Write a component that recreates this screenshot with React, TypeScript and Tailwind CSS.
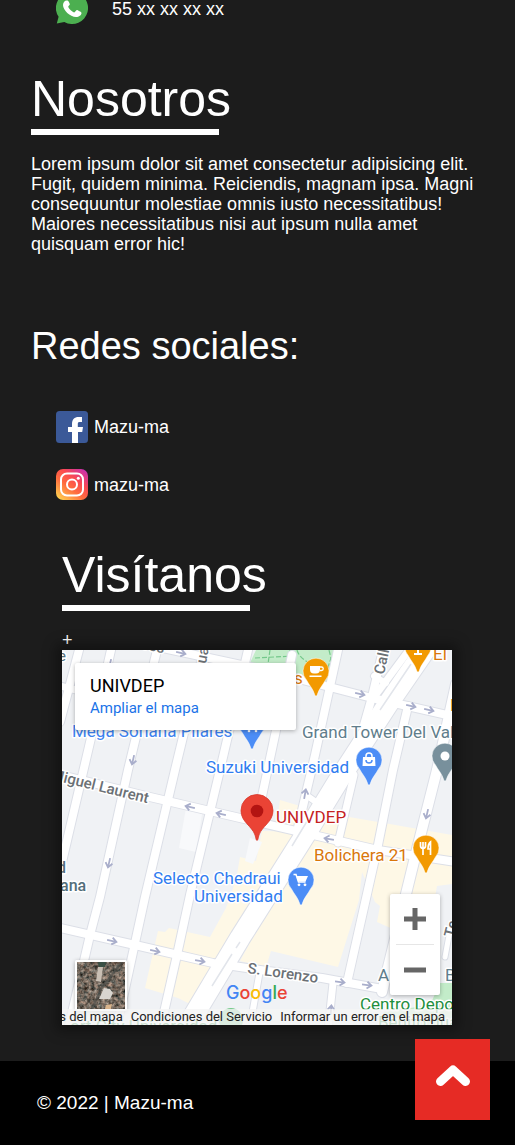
import React from "react";

const ROADS: { d: string; w: number }[] = [
  { d: "M79 650L60 722", w: 8 },
  { d: "M111 650L91 738L62 862", w: 8 },
  { d: "M157 650L128 770L100 897L90 935L68 1030", w: 8 },
  { d: "M204 650L175 770L145 897L135 943L116 1030", w: 8 },
  { d: "M248 650L220 770L190 895L177 955L160 1030", w: 8 },
  { d: "M292 655L268 768L258 815", w: 8 },
  { d: "M338 650L315 755L297 832", w: 8 },
  { d: "M383 650L372 697L364 725", w: 8 },
  { d: "M408 706L393 770L378 845L347 983", w: 8 },
  { d: "M354 775L338 843", w: 7 },
  { d: "M456 684L437 770L418 845L382 992", w: 10 },
  { d: "M451 925L445 957", w: 5 },
  { d: "M333 983L328 1030", w: 7 },
  { d: "M260 970L252 1015", w: 6 },
  { d: "M60 686L80 691L150 706L230 722", w: 7 },
  { d: "M163 648L260 669L372 698L456 717", w: 8 },
  { d: "M60 775L150 797L240 818L322 837L378 850L456 862", w: 8 },
  { d: "M60 928L135 945L213 963L260 970L322 978L382 989", w: 8 },
  { d: "M306 795L316 802", w: 6 },
  { d: "M374 676L386 683", w: 6 },
  { d: "M432 640L388 704L340 778L307 832L240 938L182 1035", w: 20 },
  { d: "M412 646L372 700", w: 7 },
];

const ARROWS: [number, number, number][] = [
  [181, 653, 13],
  [110, 664, 103],
  [133, 760, 103],
  [360, 694, 13],
  [411, 706, 13],
  [429, 710, 13],
  [190, 807, 193],
  [221, 814, 193],
  [109, 863, 103],
  [329, 839, 190],
  [305, 794, -80],
  [427, 814, 103],
  [112, 941, 12],
  [155, 951, 12],
  [200, 961, 10],
  [340, 982, 8],
  [367, 985, 8],
  [331, 1010, -85],
];

function Pin({ x, y, color, children }: { x: number; y: number; color: string; children?: React.ReactNode }) {
  return (
    <g transform={`translate(${x} ${y})`}>
      <path
        d="M-1 24.500C-3 17.500-7 14-9.500 9A13 13 0 1 1 9.500 9C7 14 3 17.500 1 24.500Q0 25.500-1 24.500Z"
        fill={color}
        stroke="#fff"
        strokeOpacity=".5"
        strokeWidth="1"
      />
      {children}
    </g>
  );
}

function Label({
  x,
  y,
  fill,
  size = 17,
  rotate = 0,
  weight = 400,
  children,
}: {
  x: number;
  y: number;
  fill: string;
  size?: number;
  rotate?: number;
  weight?: number;
  children: string;
}) {
  return (
    <text
      transform={`translate(${x} ${y}) rotate(${rotate})`}
      fill={fill}
      fontSize={size}
      fontWeight={weight}
      stroke="#fff"
      strokeWidth="3"
      strokeLinejoin="round"
      paintOrder="stroke"
    >
      {children}
    </text>
  );
}

function StreetMap() {
  return (
    <svg
      className="block h-full w-full font-[Roboto,sans-serif]"
      viewBox="62 650 390 375"
      preserveAspectRatio="xMidYMid slice"
      role="img"
      aria-label="Mapa"
    >
      <rect x="50" y="640" width="420" height="400" fill="#f0f2f5" />
      <g fill="#fef8e6">
        <path d="M280 800L300 806L330 815L349 817L384 823L452 835V884L437 886L435 897L395 930L377 922L380 906L375 902L362 872L359 900L338 967L271 951L266 967L240 961L300 850L297 832L277 822Z" />
        <path d="M262 831L310 832L240 940L193 1000L190 1004L178 998L145 988L158 931L165 932L169 928L210 937L226 908L236 880L240 857L256 861Z" />
      </g>
      <g fill="#f8f9fb">
        <path d="M186 808L202 814L196 852L179 848Z" />
        <path d="M250 838L262 842L253 864L245 861Z" />
      </g>
      <path d="M256 650H337L328 683L297 676L250 663ZM440 983H452V1025H380L384 1012L430 1005Z" fill="#c3ecc9" />
      <path
        d="M255 658L293 656L292 650M270 650L268 664M297 650Q300 660 313 664M329 650L331 658L326 674M290 650L287 664"
        fill="none"
        stroke="#74c88a"
        strokeWidth="1.200"
        strokeDasharray="5 2"
      />
      <g fill="none" stroke="#dcdfe7" strokeLinejoin="round" strokeLinecap="round">
        {ROADS.map((r, i) => (
          <path key={i} d={r.d} strokeWidth={r.w + 2} />
        ))}
      </g>
      <g fill="none" stroke="#fff" strokeLinejoin="round" strokeLinecap="round">
        {ROADS.map((r, i) => (
          <path key={i} d={r.d} strokeWidth={r.w} />
        ))}
      </g>
      <path d="M411 664L380 710M240 942L236 948M232 954L212 986M309 818L292 846" stroke="#e2e5eb" strokeWidth="1.500" fill="none" />
      {ARROWS.map(([x, y, a], i) => (
        <path
          key={i}
          transform={`translate(${x} ${y}) rotate(${a})`}
          d="M-5 0H4M0-3.500L4.500 0L0 3.500"
          fill="none"
          stroke="#a9aecb"
          strokeWidth="1.800"
        />
      ))}

      <Pin x={252} y={724} color="#4c8df6">
        <circle cx="-3" cy="7" r="1.300" fill="#fff" />
        <circle cx="4" cy="7" r="1.300" fill="#fff" />
      </Pin>
      <Pin x={316} y={671} color="#f29900">
        <path d="M-6-5H4V-1.500A4 4 0 0 1 0 2.500H-2A4 4 0 0 1-6-1.500ZM-6.500 4.500H5.500V6H-6.500Z" fill="#fff" />
        <path d="M4-4H5.500A1.500 1.500 0 0 1 5.500-.5H4" fill="none" stroke="#fff" strokeWidth="1.300" />
      </Pin>
      <Pin x={418} y={647} color="#f29900">
        <path d="M-1 0H1V6H4V8H-4V6H-1Z" fill="#fff" />
      </Pin>
      <Pin x={369} y={760} color="#4c8df6">
        <path d="M-6-3H6L6.500 6H-6.500Z" fill="#fff" />
        <path d="M-3-3V-4A3 3 0 0 1 3-4V-3" fill="none" stroke="#fff" strokeWidth="1.500" />
        <path d="M-3 0A3 3 0 0 0 3 0" fill="none" stroke="#4c8df6" strokeWidth="1.500" />
      </Pin>
      <Pin x={445} y={756} color="#78909c">
        <circle r="4.500" fill="#fff" />
      </Pin>
      <Pin x={426} y={848} color="#f29900">
        <path
          d="M-5.500-6V-2Q-5.500 0-3 .5V7M-3-6V0M-.5-6V-2Q-.5 0-3 .5M4.500 7V-6Q2-4 2 1H4.500"
          fill="none"
          stroke="#fff"
          strokeWidth="1.700"
        />
      </Pin>
      <Pin x={301} y={880} color="#4c8df6">
        <path d="M-7.500-5.500H-5L-2.500 2H4.500" fill="none" stroke="#fff" strokeWidth="1.500" />
        <path d="M-4.500-4H7L4.500 1.500H-3Z" fill="#fff" />
        <circle cx="-2" cy="4.800" r="1.400" fill="#fff" />
        <circle cx="4" cy="4.800" r="1.400" fill="#fff" />
      </Pin>
      <circle cx="231" cy="1020" r="12" fill="#74c88a" />

      <Label x={58} y={661} fill="#546e7a" size={15}>e</Label>
      <Label x={143} y={649} fill="#6b7075" size={15} rotate={12} weight={500}>res</Label>
      <Label x={206} y={664} fill="#6b7075" size={15} rotate={-80} weight={500}>uan</Label>
      <Label x={294} y={684} fill="#d9770b">s</Label>
      <Label x={433} y={660} fill="#d9770b">El</Label>
      <Label x={450} y={711} fill="#d9770b">L</Label>
      <Label x={384} y={675} fill="#6b7075" size={15} rotate={-78} weight={500}>Calle</Label>
      <Label x={72} y={737} fill="#3c82f0">Mega Soriana Pilares</Label>
      <Label x={206} y={773} fill="#2f7cf0">Suzuki Universidad</Label>
      <Label x={302} y={738} fill="#607d8b">Grand Tower Del Valle</Label>
      <Label x={50} y={779} fill="#6b7075" size={15} rotate={14} weight={500}>Miguel Laurent</Label>
      <Label x={276} y={823} fill="#c5221f">UNIVDEP</Label>
      <Label x={314} y={861} fill="#d9770b">Bolichera 21</Label>
      <Label x={153} y={884} fill="#2f7cf0">Selecto Chedraui</Label>
      <Label x={194} y={902} fill="#2f7cf0">Universidad</Label>
      <Label x={57} y={873} fill="#546e7a" size={16} weight={500}>d</Label>
      <Label x={60} y={891} fill="#546e7a" size={16} weight={500}>ana</Label>
      <Label x={247} y={973} fill="#6b7075" size={15} rotate={8} weight={500}>S. Lorenzo</Label>
      <Label x={454} y={938} fill="#6b7075" size={15} rotate={-76} weight={500}>Te</Label>
      <Label x={378} y={981} fill="#607d8b">A</Label>
      <Label x={445} y={981} fill="#607d8b">B</Label>
      <Label x={360} y={1010} fill="#1e8e3e">Centro Deportivo</Label>
      <Label x={378} y={1028} fill="#1e8e3e">Benito Juárez</Label>
      <Label x={70} y={1032} fill="#1e8e3e">ort City Universidad</Label>

      <path
        d="M257 840.500C256 840.500 256 838 255 835C252 826 241 822 241 810.500A16 16 0 0 1 273 810.500C273 822 262 826 259 835C258 838 258 840.500 257 840.500Z"
        fill="#ea4335"
        stroke="#d8382c"
        strokeWidth=".8"
      />
      <circle cx="257" cy="811" r="6.300" fill="#b31412" />
    </svg>
  );
}

function SatelliteThumb() {
  return (
    <svg viewBox="0 0 48 47" className="block h-full w-full" preserveAspectRatio="xMidYMid slice" aria-hidden="true">
      <defs>
        <filter id="roofs" x="0" y="0" width="100%" height="100%" colorInterpolationFilters="sRGB">
          <feTurbulence type="fractalNoise" baseFrequency="0.28" numOctaves="3" seed="8" />
          <feColorMatrix values="0.900 0 0 0 -0.010  0.750 0.150 0 0 -0.050  0.680 0.200 0 0 -0.080  0 0 0 0 1" />
        </filter>
      </defs>
      <rect width="48" height="47" fill="#6f6058" />
      <rect width="48" height="47" filter="url(#roofs)" />
      <path d="M45 0L24 27L15 47" fill="none" stroke="#4b4d49" strokeOpacity=".7" strokeWidth="2.500" />
      <path d="M21 0H29L28 5L22 6Z" fill="#3a5045" />
      <path d="M21 5L26 5L24 20L19 19Z" fill="#c9bfb4" />
      <path d="M27 26L33 27L36 31L33 37L22 37Z" fill="#d8d5d0" />
      <path d="M29 43L35 42L34 47H28Z" fill="#d9b48c" />
    </svg>
  );
}

function WhatsAppIcon() {
  return (
    <svg viewBox="0 0 32 32" className="h-8 w-8 shrink-0" aria-hidden="true">
      <path d="M16 0A16 16 0 1 1 8.300 30L.8 31.600L2.600 24.700A16 16 0 0 1 16 0Z" fill="#4caf50" />
      <path
        d="M10.500 8.500C9 8.500 7 10.500 7 13C7 18 14 25 20 25C23 25 25.500 23 25.500 21C25.500 20 21.500 18 20.800 18C20 18 19 20.500 18.200 20.500C17 20.500 12.200 16 12.200 14.700C12.200 14 13.800 13 13.800 12.200C13.800 11.500 12.300 8.500 11.600 8.500Z"
        fill="#fff"
      />
    </svg>
  );
}

function FacebookIcon() {
  return (
    <svg viewBox="0 0 32 32" className="h-8 w-8 shrink-0" aria-hidden="true">
      <rect width="32" height="32" rx="3.500" fill="#3b5998" />
      <path d="M16 32V21H12V16H16V13C16 8.500 18.500 6 22.500 6H26V11H23.500C22 11 21.800 11.800 21.800 13V16H27L26.200 21H22V32Z" fill="#fff" />
    </svg>
  );
}

function InstagramIcon() {
  return (
    <svg viewBox="0 0 32 32" className="h-8 w-8 shrink-0" aria-hidden="true">
      <defs>
        <linearGradient id="ig" x1="0.100" y1="1" x2="0.900" y2="0">
          <stop offset="0" stopColor="#ffd54f" />
          <stop offset=".4" stopColor="#ff6d3f" />
          <stop offset=".65" stopColor="#fb4a50" />
          <stop offset="1" stopColor="#c62fb4" />
        </linearGradient>
      </defs>
      <rect width="32" height="31" rx="7" fill="url(#ig)" />
      <rect x="5" y="4.500" width="22" height="22" rx="6" fill="none" stroke="#fff" strokeWidth="2" />
      <circle cx="16" cy="15.500" r="5" fill="none" stroke="#fff" strokeWidth="2" />
      <circle cx="22.300" cy="9.300" r="1.500" fill="#fff" />
    </svg>
  );
}

function Heading({ children }: { children: string }) {
  return <h2 className="h-16 w-[188px] border-b-6 border-white text-[50px] leading-14 whitespace-nowrap">{children}</h2>;
}

export default function App() {
  return (
    <div className="overflow-hidden bg-[#1c1c1c] font-['Liberation_Sans',Arial,sans-serif] text-[18px] leading-5 text-white">
      <main>
        <section className="px-[31px]">
          <div className="-mt-2 flex items-center gap-6 pl-[25px]">
            <WhatsAppIcon />
            <span className="pt-0.5">55 xx xx xx xx</span>
          </div>
          <div className="mt-[47px]">
            <Heading>Nosotros</Heading>
          </div>
          <p className="mt-[19px]">
            Lorem ipsum dolor sit amet consectetur adipisicing elit. Fugit, quidem minima. Reiciendis, magnam ipsa. Magni
            consequuntur molestiae omnis iusto necessitatibus! Maiores necessitatibus nisi aut ipsum nulla amet quisquam
            error hic!
          </p>
          <h3 className="mt-[70px] text-[38px] leading-11">Redes sociales:</h3>
          <ul className="mt-[43px] flex flex-col gap-[26px] pl-[25px]">
            <li>
              <a href="#facebook" className="flex items-center gap-1.5">
                <FacebookIcon />
                Mazu-ma
              </a>
            </li>
            <li>
              <a href="#instagram" className="flex items-center gap-1.5">
                <InstagramIcon />
                mazu-ma
              </a>
            </li>
          </ul>
        </section>

        <section className="mt-[46px] pr-[63px] pb-9 pl-[62px]">
          <Heading>Visítanos</Heading>
          <p className="mt-5 leading-[19px]">+</p>
          <div className="relative h-[375px] overflow-hidden font-[Roboto,sans-serif] shadow-[0_0_12px_6px_rgba(0,0,0,0.35)]">
            <StreetMap />
            <div className="absolute top-[13px] left-[13px] w-[221px] rounded-xs bg-white px-[15px] pt-3 pb-[11px] shadow-[0_1px_4px_rgba(0,0,0,0.3)]">
              <h4 className="text-[18px] leading-[22px] text-black">UNIVDEP</h4>
              <a href="#mapa" className="block text-[15px] leading-[22px] text-[#1a73e8]">
                Ampliar el mapa
              </a>
            </div>
            <button
              type="button"
              aria-label="Satélite"
              className="absolute bottom-[14px] left-[13px] h-[51px] w-13 overflow-hidden rounded-xs border-2 border-white shadow-[0_1px_4px_rgba(0,0,0,0.3)]"
            >
              <SatelliteThumb />
            </button>
            <div className="absolute right-3 bottom-[30px] w-[50px] rounded-xs bg-white shadow-[0_1px_4px_rgba(0,0,0,0.3)]">
              <button type="button" aria-label="Acercar" className="flex h-[50px] w-full items-center justify-center">
                <svg viewBox="0 0 22 22" className="h-[22px] w-[22px]" aria-hidden="true">
                  <path d="M8.500 0H13.500V8.500H22V13.500H13.500V22H8.500V13.500H0V8.500H8.500Z" fill="#666" />
                </svg>
              </button>
              <div className="mx-1.5 h-px bg-[#e6e6e6]" />
              <button type="button" aria-label="Alejar" className="flex h-[50px] w-full items-center justify-center">
                <svg viewBox="0 0 22 22" className="h-[22px] w-[22px]" aria-hidden="true">
                  <path d="M0 8.500H22V13.500H0Z" fill="#666" />
                </svg>
              </button>
            </div>
            <a
              href="#google"
              className="absolute bottom-5 left-[164px] font-[Inter,sans-serif] text-[18px] leading-6 font-medium"
            >
              <span className="text-[#4285f4]">G</span>
              <span className="text-[#ea4335]">o</span>
              <span className="text-[#fbbc05]">o</span>
              <span className="text-[#4285f4]">g</span>
              <span className="text-[#34a853]">l</span>
              <span className="text-[#ea4335]">e</span>
            </a>
            <div className="absolute inset-x-0 bottom-0 flex justify-end gap-2 overflow-hidden bg-[#f5f5f5]/80 pr-[7px] text-[13px] leading-4 whitespace-nowrap text-[#222]">
              <a href="#datos" className="shrink-0">Datos del mapa</a>
              <a href="#condiciones" className="shrink-0">Condiciones del Servicio</a>
              <a href="#error" className="shrink-0">Informar un error en el mapa</a>
            </div>
          </div>
        </section>
      </main>

      <footer className="bg-black px-[37px] py-8 text-[19px]">© 2022 | Mazu-ma</footer>

      <button
        type="button"
        aria-label="Volver arriba"
        className="fixed right-[25px] bottom-[25px] flex h-[81px] w-[75px] items-center justify-center bg-[#e62b25] pb-[9px]"
      >
        <svg viewBox="0 0 34 21" className="h-[21px] w-[34px]" aria-hidden="true">
          <path d="M4.500 16.500L17 5L29.500 16.500" fill="none" stroke="#fff" strokeWidth="9" strokeLinecap="round" strokeLinejoin="round" />
        </svg>
      </button>
    </div>
  );
}
